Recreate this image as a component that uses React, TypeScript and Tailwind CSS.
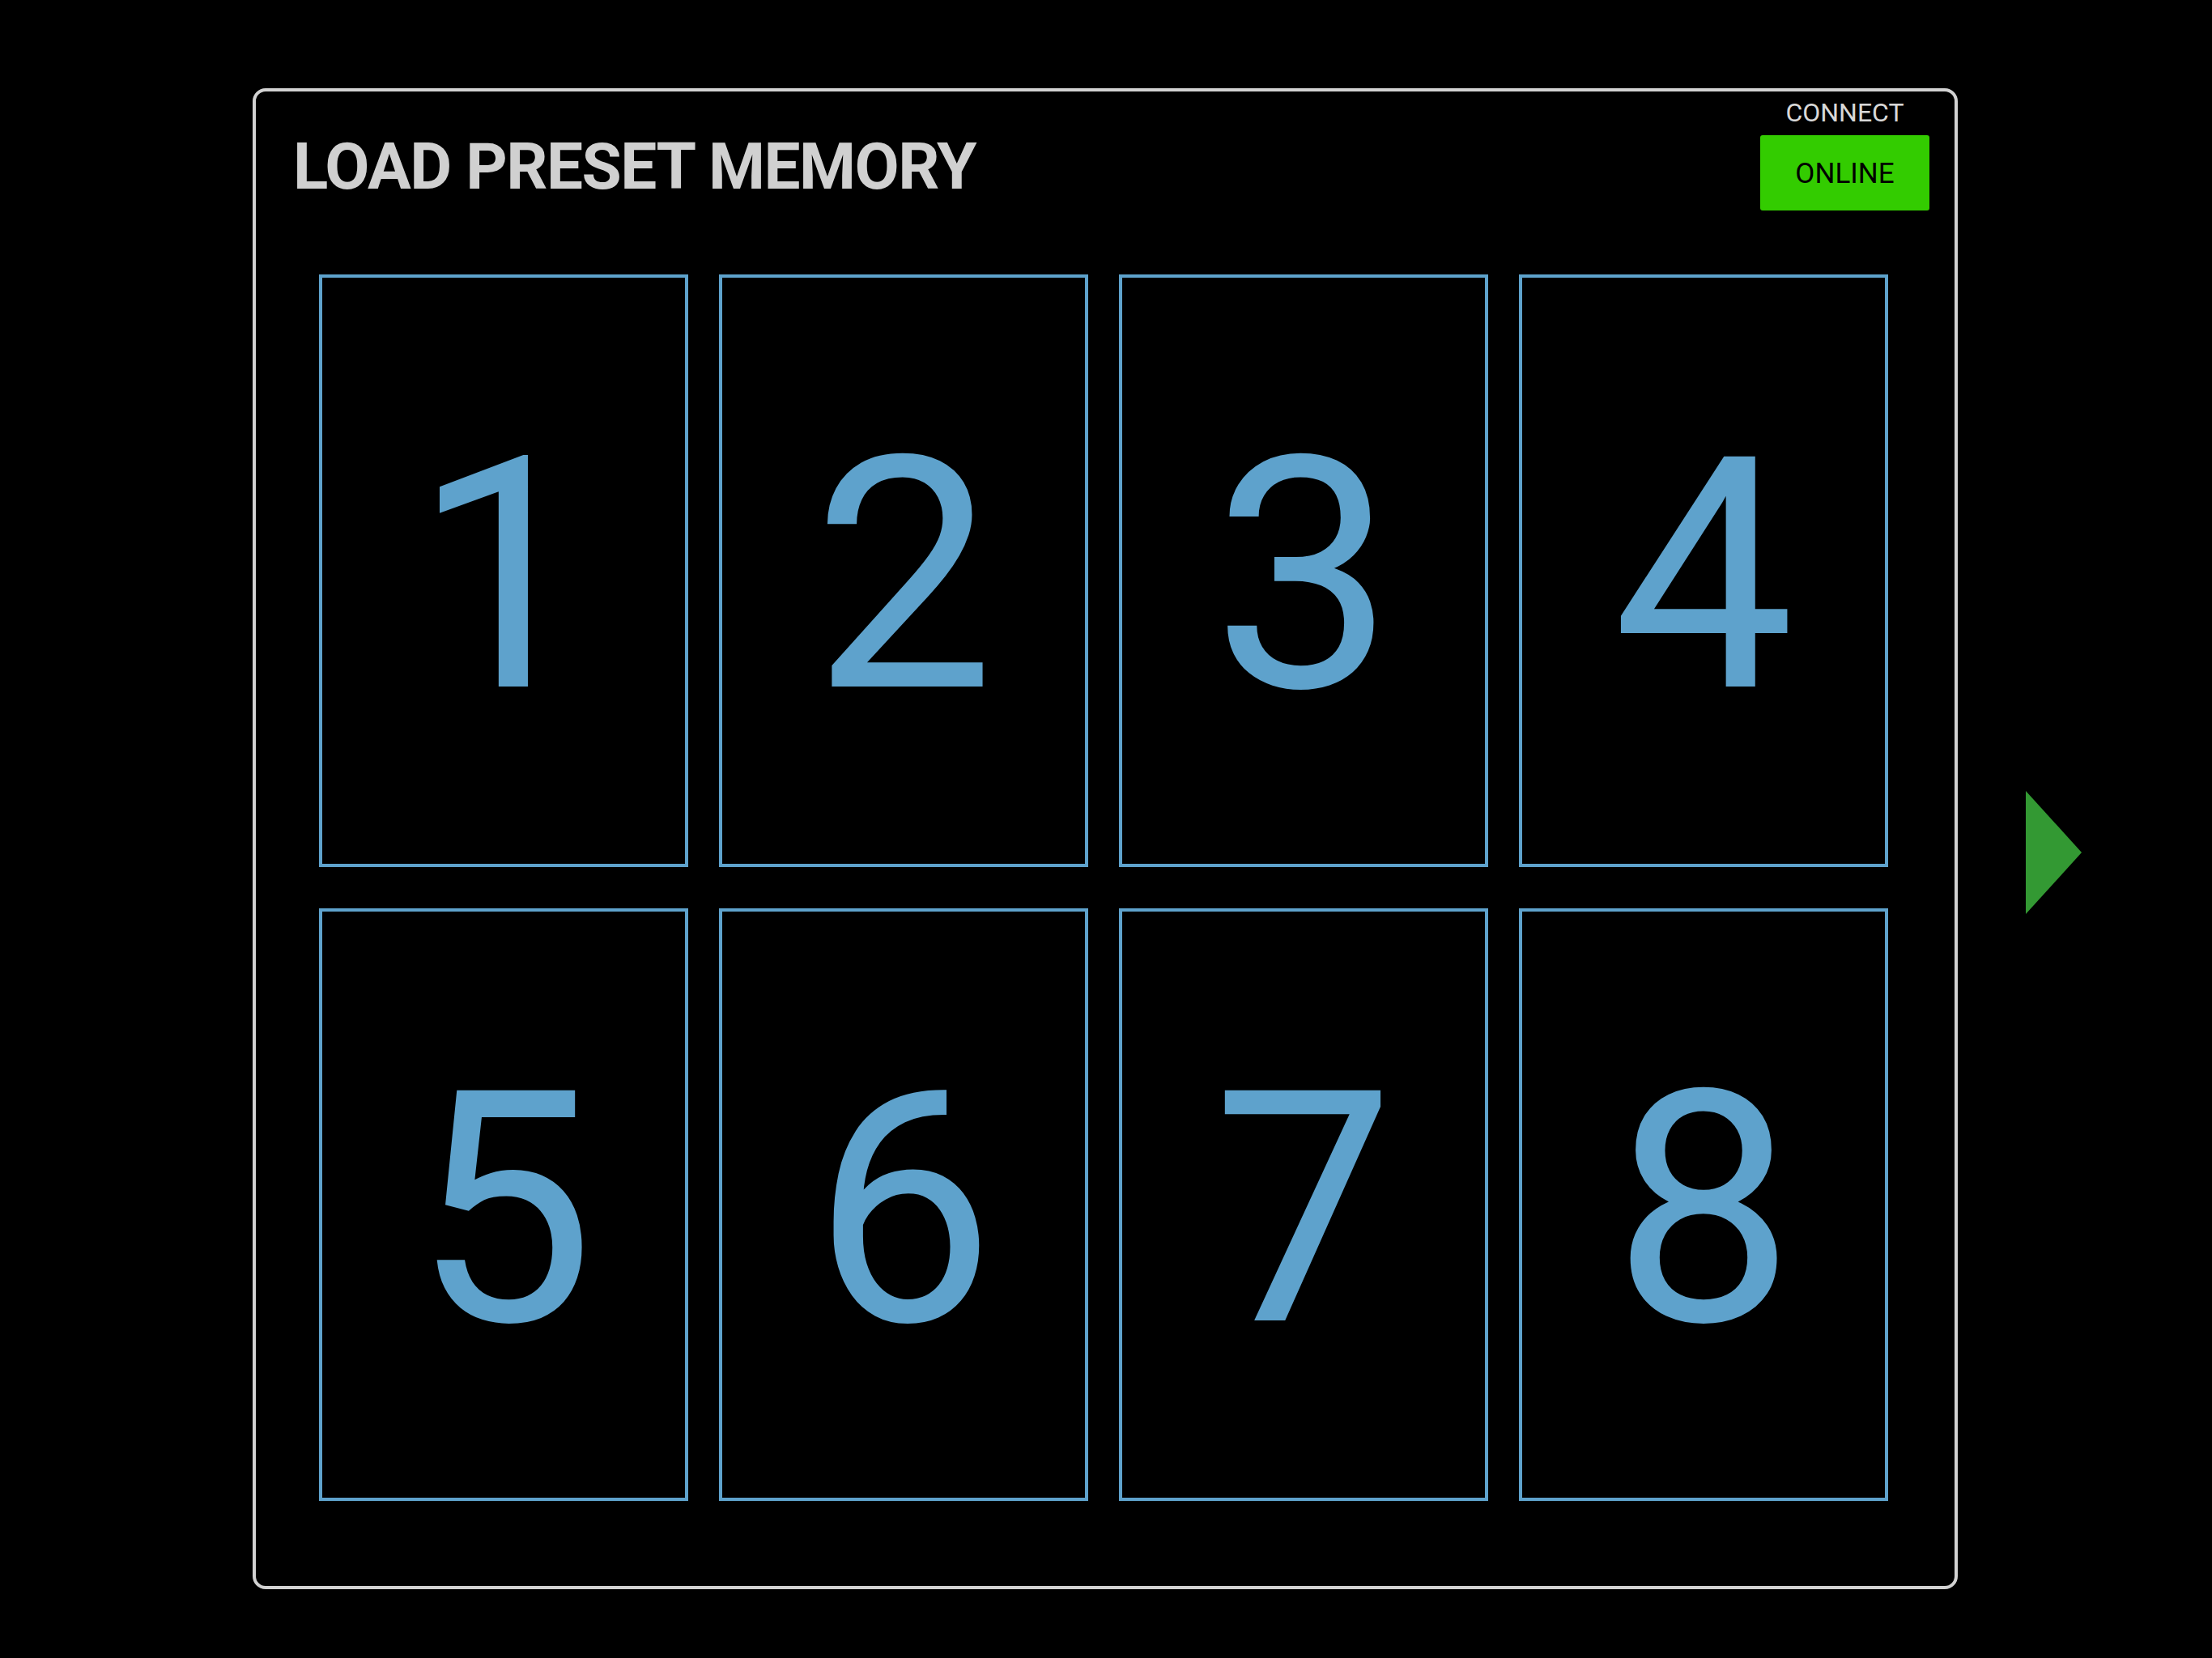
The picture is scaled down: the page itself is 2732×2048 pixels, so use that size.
import { useState } from 'react';

const PRESETS = [1, 2, 3, 4, 5, 6, 7, 8];

function PresetTile({ n, active, onPick }: { n: number; active: boolean; onPick: (n: number) => void }) {
  return (
    <button
      type="button"
      onClick={() => onPick(n)}
      className={
        'flex items-center justify-center border-4 border-[#5ea2cc] text-[#5ea2cc] ' +
        (active ? 'bg-[#0b1a24]' : 'bg-black')
      }
    >
      <span className="mt-[14px] text-[400px] leading-none">{n}</span>
    </button>
  );
}

export default function App() {
  const [picked, setPicked] = useState<number | null>(null);

  return (
    <div className="min-h-screen w-full bg-black font-['Roboto','Liberation_Sans',Arial,sans-serif]">
      <div className="flex items-start">
        {/* main panel */}
        <div className="ml-[312px] mt-[109px] flex h-[1854px] w-[2106px] flex-col rounded-[16px] border-4 border-[#d2d2d2]">
          <div className="flex items-start justify-between pl-[46px] pr-[31px] pt-[10px]">
            <h1 className="mt-[43px] text-[80px] font-bold leading-none tracking-[-1.5px] text-[#d0d0d0]">
              LOAD PRESET MEMORY
            </h1>
            <div className="flex flex-col items-center">
              <div className="text-[32px] leading-none text-[#d8d8d8]">CONNECT</div>
              <div className="mt-[12px] flex h-[93px] w-[209px] items-center justify-center rounded-[3px] bg-[#33cc00] pt-[2px] text-[35px] leading-none text-black">
                ONLINE
              </div>
            </div>
          </div>

          <div className="ml-[78px] mt-[79px] grid grid-cols-[repeat(4,456px)] grid-rows-[repeat(2,732px)] gap-x-[38px] gap-y-[51px]">
            {PRESETS.map((n) => (
              <PresetTile key={n} n={n} active={picked === n} onPick={setPicked} />
            ))}
          </div>
        </div>

        {/* next page arrow */}
        <svg className="ml-[84px] mt-[977px]" width="69" height="152" viewBox="0 0 69 152">
          <polygon points="0,0 69,76 0,152" fill="#339933" />
        </svg>
      </div>
    </div>
  );
}
